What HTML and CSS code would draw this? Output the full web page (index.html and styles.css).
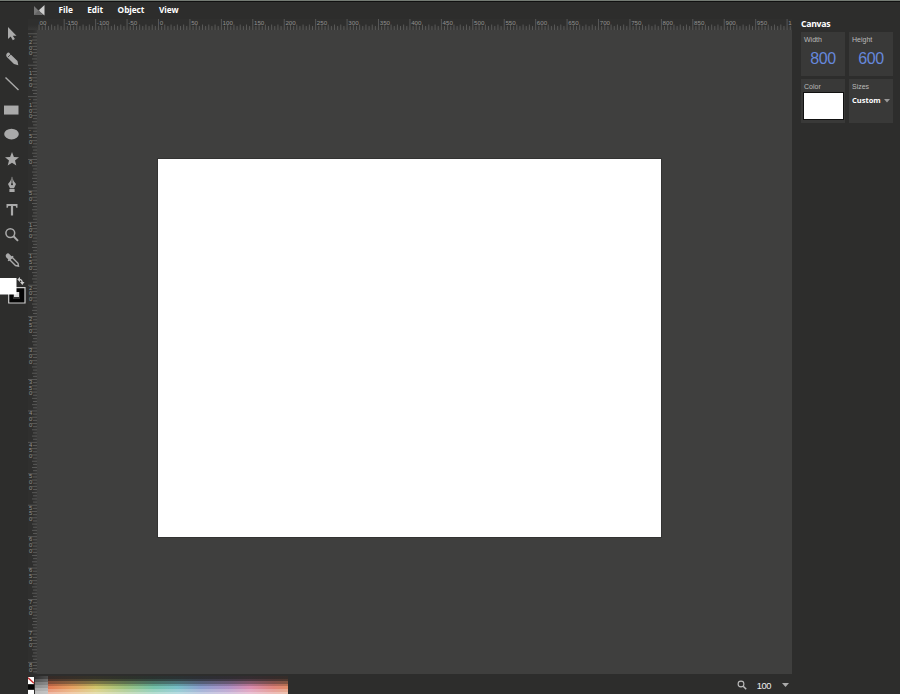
FILE: index.html
```html
<!DOCTYPE html>
<html lang="en">
<head>
<meta charset="utf-8">
<title>Vector editor</title>
<link rel="stylesheet" href="styles.css">
</head>
<body>
<div class="app">
  <nav class="menu">
    <svg class="logo" width="11" height="11" viewBox="0 0 11 11"><path d="M0 1V10H9Z" fill="#777"/><path d="M10.5 0V10.5L4.5 5.5Z" fill="#ccc"/><path d="M0 10L5 5L8 10Z" fill="#666"/></svg>
    <span>File</span><span>Edit</span><span>Object</span><span>View</span>
  </nav>
  <aside class="tools">
    <svg viewBox="0 0 24 25"><path d="M8 6V18L10.7 15.5L12.8 19.2L14.9 18L12.8 14.7H16.5Z"/></svg>
    <svg viewBox="0 0 24 25"><path d="M6.8 7.5Q8.5 5.6 10 7.6L17.5 15L18.3 19.3L14 18L6.6 10.6Q5.6 9 6.8 7.5Z"/><path d="M8 11L11 8" stroke="#2d2d2c" stroke-width=".8"/></svg>
    <svg viewBox="0 0 24 25"><path d="M5.5 6.5L18.5 19" stroke="#aaa" stroke-width="1.4"/></svg>
    <svg viewBox="0 0 24 25"><path d="M4 9.5H18.5V18.5H4Z"/></svg>
    <svg viewBox="0 0 24 25"><ellipse cx="11.5" cy="13" rx="7.3" ry="5.4"/></svg>
    <svg viewBox="0 0 24 25"><path d="M12 6L13.9 11L19 11.3L15 14.5L16.3 19.5L12 16.7L7.7 19.5L9 14.5L5 11.3L10.1 11Z"/></svg>
    <svg viewBox="0 0 24 25"><path d="M12 4.5Q13 9 16 12L14 16.3H10L8 12Q11 9 12 4.5ZM9.4 17H14.6V20H9.4Z"/><path d="M12 6V12" stroke="#2d2d2c" stroke-width=".8"/><circle cx="12" cy="12.3" r="1" fill="#2d2d2c"/></svg>
    <svg viewBox="0 0 24 25"><path d="M6.5 7H17.5V10.6H16.2L15.7 9H13.1V18.5H10.9V9H8.3L7.8 10.6H6.5Z"/></svg>
    <svg viewBox="0 0 24 25"><g fill="none" stroke="#aaa"><circle cx="10.3" cy="11" r="4.4" stroke-width="1.5"/><path d="M13.5 14.2L18 18.8" stroke-width="2"/></g></svg>
    <svg viewBox="0 0 24 25"><path d="M5.8 8Q7.5 4.8 10 7.7L11.5 9.2L13 8.8L13.5 10L9 14.2L7.7 13.8L8.3 12.3L6.5 10.6Q5.5 9.5 5.8 8Z"/><path d="M9.5 12.5L12 10.2L18 16.2L18.5 19L15.5 18.5Z" fill="none" stroke="#aaa" stroke-width="1.4"/></svg>
    <svg class="colors" viewBox="0 0 28 32"><path d="M8.7 15.7H25V31H8.7Z" fill="#050505" stroke="#ccc" stroke-width="1.2"/><path d="M13 20H20V27H13Z" fill="#333"/><path d="M14 20H19V25H14Z" fill="#ddd"/><path d="M0 6H16.5V22.5H0Z" fill="#fff"/><path d="M19 7.5Q22 7 22.3 11" fill="none" stroke="#ccc" stroke-width="1.4"/><path d="M17.3 7.5L20 5V10ZM20 10H24.5L22.3 13Z" fill="#ccc"/></svg>
  </aside>
  <main class="workspace">
    <svg class="ruler-x" id="rx" width="764" height="11"></svg>
    <div class="stage">
      <svg class="ruler-y" id="ry" width="9" height="644"></svg>
      <div class="board"><div class="artboard"></div></div>
    </div>
    <footer class="footer">
      <svg class="special" width="7" height="20" viewBox="0 0 7 20"><path d="M0 3H6V10H0Z" fill="#fff"/><path d="M0 3.8L6 9.3" stroke="#c33" stroke-width="1.5"/><path d="M0 11H6V15H0Z" fill="#050505"/><path d="M0 16H6V20H0Z" fill="#fff"/></svg>
      <div class="palette">
        <div class="grays"></div><div class="hues"></div>
      </div>
      <div class="zoom">
        <svg width="10" height="10" viewBox="0 0 10 10"><g fill="none" stroke="#bbb"><circle cx="4" cy="4" r="2.9" stroke-width="1.1"/><path d="M6.2 6.2L9.2 9.2" stroke-width="1.5"/></g></svg>
        <span>100</span>
        <svg class="down" width="7" height="4" viewBox="0 0 7 4"><path d="M0 0H7L3.5 4Z" fill="#aaa"/></svg>
      </div>
    </footer>
  </main>
  <aside class="panel">
    <h1>Canvas</h1>
    <div class="cards">
      <section><label>Width</label><b class="num">800</b></section>
      <section><label>Height</label><b class="num">600</b></section>
      <section><label>Color</label><div class="swatch"></div></section>
      <section><label>Sizes</label><div class="select">Custom <svg width="6" height="4" viewBox="0 0 6 4"><path d="M0 0H6L3 3.5Z" fill="#999"/></svg></div></section>
    </div>
  </aside>
</div>
<script src="rulers.js"></script>
</body>
</html>
```
FILE: rulers.js
```js
const STEP = 3.143;
const line = (x1, y1, x2, y2) => `<path d="M${x1} ${y1}L${x2} ${y2}"/>`;
let h = '', v = '';
for (let i = -39; i <= 201; i++) {
  const x = 130.5 + i * STEP;
  const major = i % 10 === 0;
  if (x > 9 && x < 764) h += line(x, major ? 0 : i % 2 ? 7 : 5.5, x, 11);
  if (major && x < 756) {
    h += `<text x="${x + 1.2}" y="6">${i * 5}</text>`;
  }
}
h += '<text x="11.5" y="6">00</text><text x="760.3" y="6">1</text>';
for (let i = -40; i <= 164; i++) {
  const y = 129.5 + i * STEP;
  const major = i % 10 === 0;
  if (y > 0 && y < 644) v += line(major ? 0 : i % 2 ? 5 : 4, y, 9, y);
  if (major) {
    const chars = i === 160 ? '80' : String(i * 5);
    [...chars].forEach((c, n) => {
      v += `<text x="1" y="${y + 4.3 + n * 5.8}">${c}</text>`;
    });
  }
}
document.getElementById('rx').innerHTML = h;
document.getElementById('ry').innerHTML = v;
```
FILE: styles.css
```css
* { box-sizing: border-box; }
body { margin: 0; background: #2d2d2c; font-family: "Open Sans", sans-serif; color: #fff; }
.app { display: grid; width: 900px; height: 694px; grid-template: 19px 675px / 28px 764px 108px; overflow: hidden; }
.menu { grid-column: 1 / -1; display: flex; align-items: center; padding: 0 0 0 34px; border-top: 1px solid #747b74; box-shadow: inset 0 1px #111; font-size: 8.3px; font-weight: 700; line-height: 16px; letter-spacing: -.08px; }
.logo { margin-right: 13.5px; }
.menu span { margin-right: 14.6px; }
.tools { display: flex; flex-direction: column; padding-top: 2px; }
.tools svg { width: 24px; height: 25.1px; flex: none; fill: #aaa; }
.tools .colors { width: 28px; height: 32px; }
.workspace { display: flex; flex-direction: column; background: #3f3f3e; }
.ruler-x, .ruler-y { display: block; stroke: #626261; stroke-width: .8; flex: none; overflow: hidden; }
.ruler-x { background: linear-gradient(#2f2f2e 6px, #383837); }
.ruler-y { background: linear-gradient(90deg, #2f2f2e 5px, #383837); }
.ruler-x text, .ruler-y text { fill: #929291; stroke: none; font: 6.2px "Liberation Sans", sans-serif; }
.ruler-y text { font-size: 5.8px; }
.stage { display: flex; height: 644px; }
.board { flex: 1; padding: 129px 0 0 121px; }
.artboard { width: 503px; height: 378px; background: #fff; outline: 1px solid #333332; }
.footer { display: flex; height: 20px; background: #2d2d2c; }
.palette { display: flex; align-items: flex-end; height: 20px; width: 253px; }
.grays { width: 13px; height: 18px; background: linear-gradient(90deg, transparent, #ffffff22), linear-gradient(#303030 3px, #555 3px 6px, #777 6px 9px, #909090 9px 12px, #aaa 12px 15px, #bbb 15px); }
.hues { width: 240px; height: 18px; background: linear-gradient(#252525e8 0 3px, #252525c4 3px 5px, #33333388 5px 8px, #55555544 8px 10px, #ffffff22 10px 13px, #ffffff5a 13px 16px, #ffffff88 16px), linear-gradient(90deg, #dc653c, #e2934a 10%, #cbbd55 20%, #8fb86b 32%, #5fb99b 44%, #63b4be 54%, #7a8fc4 64%, #a181bd 75%, #d27ba4 84%, #d97066 94%, #d97a50); }
.zoom { margin-left: auto; display: flex; align-items: center; padding: 3px 3px 0 0; color: #eee; }
.zoom > svg:first-child { margin: -1px 10px 0 0; }
.zoom span { font: 9.3px "Liberation Sans", sans-serif; letter-spacing: -.4px; }
.down { margin: -2px 0 0 11px; }
.panel { padding: 0 7px 0 9px; }
h1 { margin: 0; height: 13px; font: 700 8.7px/11px "Open Sans", sans-serif; letter-spacing: -.3px; }
.cards { display: grid; grid-template-columns: 44px 44px; grid-auto-rows: 44px; gap: 3px 4px; }
.cards section { background: #393938; padding: 3px 3px 0; }
label { display: block; height: 11px; font: 7px/9px "Liberation Sans", sans-serif; color: #bbb; }
.num { display: block; text-align: center; font: 16px/25px "Liberation Sans", sans-serif; letter-spacing: -.4px; color: #6688dc; }
.swatch { width: 39px; height: 26px; background: #fff; outline: 1px solid #111; }
.select { display: flex; align-items: center; justify-content: space-between; width: 38px; font: 700 7.5px/14px "Open Sans", sans-serif; }
.select svg { margin-top: 1px; }
```
